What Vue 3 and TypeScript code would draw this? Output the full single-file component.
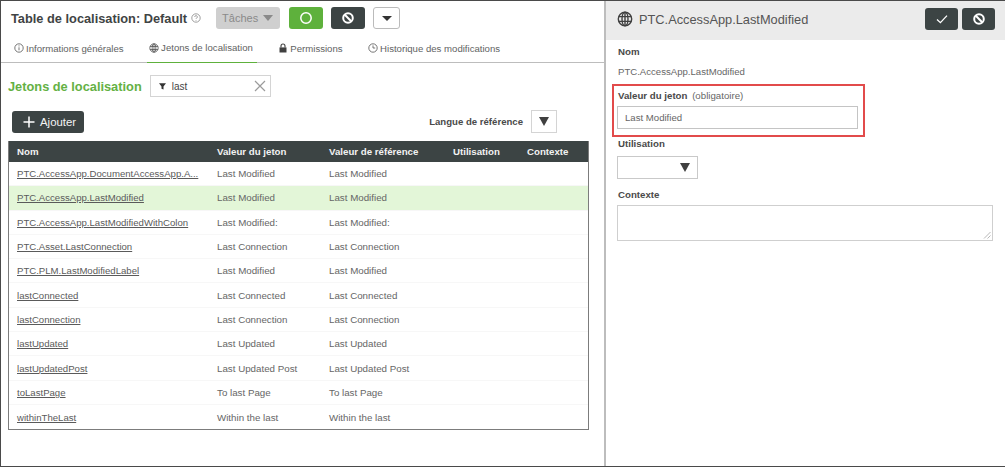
<template>
  <div class="frame">
    <section class="main">
      <header class="top">
        <h1 class="title">Table de localisation: Default</h1>
        <svg class="help" viewBox="0 0 10 10"><circle cx="5" cy="5" r="4.2" /><path d="M3.7 4a1.3 1.3 0 1 1 1.9 1.1c-.4.2-.6.4-.6.9" /><path d="M5 7.1v.7" /></svg>
        <button class="tasks">Tâches <span class="caret caret-grey"></span></button>
        <button class="btn-green"><svg viewBox="0 0 14 14"><circle cx="7" cy="7" r="5.2" /></svg></button>
        <button class="btn-dark btn-cancel"><svg viewBox="0 0 14 14"><circle cx="7" cy="7" r="4.8" /><path d="M3.8 3.8l6.4 6.4" /></svg></button>
        <button class="btn-more"><span class="caret caret-dark"></span></button>
      </header>

      <nav class="tabs">
        <a v-for="tab in tabs" :key="tab.label" class="tab" :class="{ active: tab.active }">
          <svg v-if="tab.icon === 'info'" viewBox="0 0 10 10" class="tab-icon line"><circle cx="5" cy="5" r="4.2" /><path d="M5 4.3v3M5 2.4v1" /></svg>
          <svg v-else-if="tab.icon === 'globe'" viewBox="0 0 10 10" class="tab-icon line"><circle cx="5" cy="5" r="4.2" /><ellipse cx="5" cy="5" rx="1.9" ry="4.2" /><path d="M5 .8v8.4M1 3.5h8M1 6.5h8" /></svg>
          <svg v-else-if="tab.icon === 'lock'" viewBox="0 0 10 10" class="tab-icon"><path class="fill" d="M1.5 4.4h7v5.1h-7z" /><path class="shackle" d="M3 4.4V3a2 2 0 0 1 4 0v1.4" /></svg>
          <svg v-else viewBox="0 0 10 10" class="tab-icon line"><circle cx="5" cy="5" r="4.2" /><path d="M5 2.4V5h2.2" /></svg>
          {{ tab.label }}
        </a>
      </nav>

      <div class="section-head">
        <h2 class="section-title">Jetons de localisation</h2>
        <div class="filter">
          <svg class="funnel" viewBox="0.5 0.8 7 7"><path d="M.5 1h7L5 4.2V7.4L3 6.6V4.2z" /></svg>
          <span class="filter-text">last</span>
          <svg class="clear" viewBox="0 0 12 12"><path d="M1 1l10 10M11 1L1 11" /></svg>
        </div>
      </div>

      <div class="actions">
        <button class="btn-dark btn-add">
          <svg viewBox="0 0 12 12"><path d="M6 .5v11M.5 6h11" /></svg>
          Ajouter
        </button>
        <div class="ref-lang">
          <span>Langue de référence</span>
          <div class="ref-select"><span class="caret caret-big"></span></div>
        </div>
      </div>

      <div class="table">
        <div class="row head">
          <div v-for="col in columns" :key="col">{{ col }}</div>
        </div>
        <div v-for="row in rows" :key="row.name" class="row" :class="{ selected: row.selected }">
          <div class="cell-name"><a>{{ row.name }}</a></div>
          <div>{{ row.value }}</div>
          <div>{{ row.value }}</div>
          <div></div>
          <div></div>
        </div>
      </div>
    </section>

    <aside class="side">
      <header class="side-head">
        <svg class="side-globe" viewBox="0 0 16 16"><circle cx="8" cy="8" r="6.7" /><ellipse cx="8" cy="8" rx="3" ry="6.7" /><path d="M8 1.3v13.4M1.8 5.6h12.4M1.8 10.4h12.4" /></svg>
        <span class="side-title">PTC.AccessApp.LastModified</span>
        <div class="side-buttons">
          <button class="btn-dark btn-side"><svg class="check" viewBox="0 0 14 14"><path d="M2 7.5l3.4 3.2L12 3.6" /></svg></button>
          <button class="btn-dark btn-side btn-cancel"><svg viewBox="0 0 14 14"><circle cx="7" cy="7" r="4.8" /><path d="M3.8 3.8l6.4 6.4" /></svg></button>
        </div>
      </header>

      <div class="form">
        <label class="field-label">Nom</label>
        <p class="field-value">PTC.AccessApp.LastModified</p>

        <div class="highlight">
          <label class="field-label">Valeur du jeton <span class="required">(obligatoire)</span></label>
          <div class="input">Last Modified</div>
        </div>

        <label class="field-label usage-label">Utilisation</label>
        <div class="usage-select"><span class="caret caret-big"></span></div>

        <label class="field-label context-label">Contexte</label>
        <div class="textarea">
          <svg class="grip" viewBox="0 0 8 8"><path d="M1 7.5L7.5 1M4.5 7.5l3-3" /></svg>
        </div>
      </div>
    </aside>
  </div>
</template>

<script setup lang="ts">
interface Tab {
  label: string;
  icon: string;
  active?: boolean;
}

interface TokenRow {
  name: string;
  value: string;
  selected?: boolean;
}

const tabs: Tab[] = [
  { label: 'Informations générales', icon: 'info' },
  { label: 'Jetons de localisation', icon: 'globe', active: true },
  { label: 'Permissions', icon: 'lock' },
  { label: 'Historique des modifications', icon: 'clock' },
];

const columns = ['Nom', 'Valeur du jeton', 'Valeur de référence', 'Utilisation', 'Contexte'];

const rows: TokenRow[] = [
  { name: 'PTC.AccessApp.DocumentAccessApp.A...', value: 'Last Modified' },
  { name: 'PTC.AccessApp.LastModified', value: 'Last Modified', selected: true },
  { name: 'PTC.AccessApp.LastModifiedWithColon', value: 'Last Modified:' },
  { name: 'PTC.Asset.LastConnection', value: 'Last Connection' },
  { name: 'PTC.PLM.LastModifiedLabel', value: 'Last Modified' },
  { name: 'lastConnected', value: 'Last Connected' },
  { name: 'lastConnection', value: 'Last Connection' },
  { name: 'lastUpdated', value: 'Last Updated' },
  { name: 'lastUpdatedPost', value: 'Last Updated Post' },
  { name: 'toLastPage', value: 'To last Page' },
  { name: 'withinTheLast', value: 'Within the last' },
];
</script>

<style>
html,
body {
  margin: 0;
  background: #fff;
}
</style>

<style scoped>
.frame {
  display: flex;
  box-sizing: border-box;
  width: 1005px;
  height: 467px;
  overflow: hidden;
  border-top: 1px solid #4a4a4a;
  border-bottom: 1px solid #4a4a4a;
  border-left: 1px solid #4a4a4a;
  font-family: "Liberation Sans", Arial, sans-serif;
  color: #555;
  background: #fff;
}

button {
  font-family: inherit;
  padding: 0;
  cursor: pointer;
}

svg {
  display: block;
}

.main {
  flex: none;
  width: 603px;
  box-sizing: border-box;
}

.top {
  display: flex;
  align-items: center;
  height: 34px;
  padding: 0 0 0 10px;
}

.title {
  margin: 0;
  font-size: 12.8px;
  font-weight: 700;
  color: #3f4444;
}

.help {
  width: 10px;
  height: 10px;
  margin-left: 4px;
  fill: none;
  stroke: #777;
  stroke-width: 0.7;
}

.tasks {
  display: flex;
  align-items: center;
  gap: 5px;
  height: 22px;
  width: 64px;
  margin-left: 15px;
  padding-left: 6px;
  border: 0;
  border-radius: 3px;
  background: #cfcfcf;
  color: #8a8a8a;
  font-size: 11px;
}

.btn-green {
  display: flex;
  align-items: center;
  justify-content: center;
  width: 34px;
  height: 22px;
  margin-left: 9px;
  border: 0;
  border-radius: 3px;
  background: #5eb13c;
}

.btn-green svg {
  width: 14px;
  height: 14px;
  fill: none;
  stroke: #fff;
  stroke-width: 1.5;
}

.btn-dark {
  display: flex;
  align-items: center;
  justify-content: center;
  border: 0;
  border-radius: 3px;
  background: #3c4444;
  color: #fff;
}

.top .btn-cancel {
  width: 34px;
  height: 22px;
  margin-left: 8px;
}

.btn-cancel svg {
  width: 14px;
  height: 14px;
  fill: none;
  stroke: #fff;
  stroke-width: 2;
}

.btn-more {
  display: flex;
  align-items: center;
  justify-content: center;
  box-sizing: border-box;
  width: 27px;
  height: 22px;
  margin-left: 8px;
  border: 1px solid #bbb;
  border-radius: 3px;
  background: #fff;
}

.caret {
  display: block;
  width: 0;
  height: 0;
  border-style: solid;
  border-color: transparent;
  border-bottom-width: 0;
}

.caret-grey {
  border-width: 6px 5px 0;
  border-top-color: #8a8a8a;
}

.caret-dark {
  border-width: 5px 5px 0;
  border-top-color: #333;
}

.caret-big {
  border-width: 9px 5.5px 0;
  border-top-color: #404040;
}

.tabs {
  display: flex;
  gap: 19.5px;
  height: 27px;
  border-bottom: 1px solid #bdbdbd;
  padding-left: 11px;
}

.tab {
  display: flex;
  align-items: center;
  gap: 2px;
  box-sizing: border-box;
  height: 28px;
  padding: 0 4px 2px 2px;
  font-size: 9.6px;
  color: #5f6363;
}

.tab.active {
  border-bottom: 1px solid #5eb13c;
}

.tab-icon {
  flex: none;
  width: 10px;
  height: 10px;
}

.tab-icon.line {
  fill: none;
  stroke: #555;
  stroke-width: 0.8;
}

.tab-icon .fill {
  fill: #404040;
}

.tab-icon .shackle {
  fill: none;
  stroke: #404040;
  stroke-width: 1.1;
}

.section-head {
  display: flex;
  align-items: center;
  height: 22px;
  margin-top: 12px;
  padding-left: 7px;
}

.section-title {
  margin: 0;
  font-size: 12.8px;
  font-weight: 700;
  color: #64b144;
}

.filter {
  display: flex;
  align-items: center;
  box-sizing: border-box;
  width: 121px;
  height: 22px;
  margin-left: 8px;
  padding: 0 4px 0 8px;
  border: 1px solid #d4d4d4;
}

.funnel {
  width: 7px;
  height: 7px;
  fill: #333;
}

.filter-text {
  margin-left: 6px;
  font-size: 10px;
  color: #444;
}

.clear {
  width: 12px;
  height: 12px;
  margin-left: auto;
  fill: none;
  stroke: #9b9b9b;
  stroke-width: 1.2;
}

.actions {
  display: flex;
  align-items: center;
  justify-content: space-between;
  height: 23px;
  margin-top: 13px;
  padding: 0 47px 0 11px;
}

.btn-add {
  justify-content: flex-start;
  gap: 5px;
  width: 72px;
  height: 22px;
  padding-left: 11px;
  font-size: 11.4px;
  color: #f4f4f4;
}

.btn-add svg {
  width: 12px;
  height: 12px;
  fill: none;
  stroke: #fff;
  stroke-width: 1.5;
}

.ref-lang {
  display: flex;
  align-items: center;
  gap: 8px;
  font-size: 9.6px;
  font-weight: 700;
  color: #4a4a4a;
}

.ref-select {
  display: flex;
  align-items: center;
  justify-content: center;
  box-sizing: border-box;
  width: 26px;
  height: 23px;
  border: 1px solid #d4d4d4;
}

.table {
  box-sizing: border-box;
  width: 581px;
  margin: 8px 0 0 7px;
  border: 1px solid #7c7c7c;
  border-top: 0;
}

.row {
  display: grid;
  grid-template-columns: 200px 112px 124px 74px 1fr;
  align-items: center;
  height: 24.3px;
  padding-left: 8px;
  font-size: 9.75px;
  color: #666;
  border-bottom: 1px solid #f7f7f7;
  box-sizing: border-box;
}

.row:last-child {
  border-bottom: 0;
}

.row.head {
  height: 21px;
  background: #3c4444;
  color: #f2f2f2;
  font-weight: 700;
  font-size: 9.7px;
  border-bottom: 0;
}

.row.selected {
  background: #e3f6d8;
}

.cell-name a {
  font-size: 9.6px;
  color: #5a5a5a;
  text-decoration: underline;
}

.side {
  flex: 1;
  min-width: 0;
  border-left: 2px solid #bdbdbd;
}

.side-head {
  display: flex;
  align-items: center;
  box-sizing: border-box;
  height: 39px;
  padding: 0 10px 3px 11px;
  background: #ebebeb;
}

.side-globe {
  width: 16px;
  height: 16px;
  fill: none;
  stroke: #404040;
  stroke-width: 1.4;
}

.side-title {
  margin-left: 6px;
  font-size: 12.8px;
  color: #555;
}

.side-buttons {
  display: flex;
  gap: 4px;
  margin-left: auto;
}

.btn-side {
  width: 33px;
  height: 22px;
}

.check {
  width: 14px;
  height: 14px;
  fill: none;
  stroke: #fff;
  stroke-width: 1.3;
}

.form {
  display: flex;
  flex-direction: column;
  padding: 6px 0 0 11px;
}

.field-label {
  display: block;
  padding-left: 1px;
  font-size: 9.7px;
  font-weight: 700;
  line-height: 12px;
  color: #4a4a4a;
}

.field-value {
  margin: 8px 0 0;
  padding-left: 1px;
  font-size: 9.6px;
  line-height: 12px;
  color: #666;
}

.highlight {
  box-sizing: border-box;
  width: 253px;
  height: 53px;
  margin: 6px 0 0 -5px;
  padding: 4px 0 0 3px;
  border: 2px solid #e24b4b;
}

.required {
  margin-left: 2px;
  font-weight: 400;
  color: #666;
}

.input {
  box-sizing: border-box;
  display: flex;
  align-items: center;
  width: 241px;
  height: 23px;
  margin-top: 4px;
  padding-left: 7px;
  border: 1px solid #c4c4c4;
  font-size: 9.6px;
  color: #666;
}

.usage-label {
  margin-top: 1px;
}

.usage-select {
  display: flex;
  align-items: center;
  justify-content: flex-end;
  box-sizing: border-box;
  width: 81px;
  height: 23px;
  margin-top: 6px;
  padding-right: 7px;
  border: 1px solid #c9c9c9;
}

.context-label {
  margin-top: 10px;
}

.textarea {
  position: relative;
  box-sizing: border-box;
  width: 376px;
  height: 36px;
  margin-top: 4px;
  border: 1px solid #cfcfcf;
}

.grip {
  position: absolute;
  right: 1px;
  bottom: 1px;
  width: 8px;
  height: 8px;
  fill: none;
  stroke: #888;
  stroke-width: 0.6;
}
</style>
